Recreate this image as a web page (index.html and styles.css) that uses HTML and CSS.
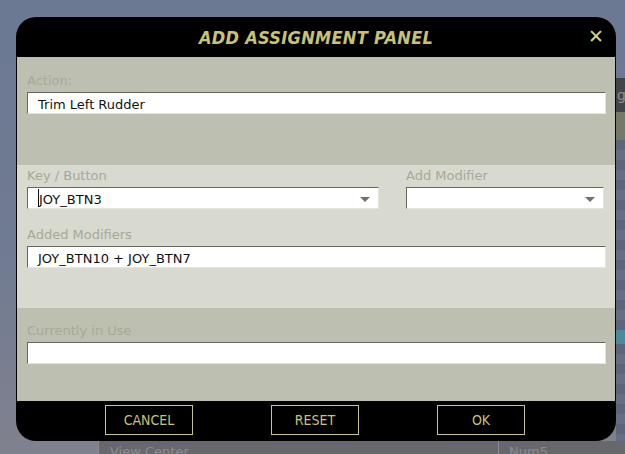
FILE: index.html
```html
<!DOCTYPE html>
<html lang="en">
<head>
  <meta charset="UTF-8" />
  <title>Add Assignment Panel</title>
  <link rel="stylesheet" href="styles.css">
</head>
<body>
  <div class="backdrop">
    <div class="side">
      <div class="side-gap"></div>
      <div class="side-head">g</div>
      <div class="side-bar"></div>
      <div class="side-rows">
        <div class="row"></div><div class="row alt"></div><div class="row"></div><div class="row alt"></div>
        <div class="row"></div><div class="row alt"></div><div class="row"></div><div class="row alt"></div>
        <div class="row"></div><div class="row alt"></div><div class="row"></div><div class="row alt"></div>
        <div class="row"></div><div class="row alt"></div><div class="row"></div><div class="row alt"></div>
        <div class="row"></div><div class="row alt"></div><div class="row"></div><div class="row sel"></div>
        <div class="row"></div><div class="row alt"></div><div class="row"></div><div class="row alt"></div>
        <div class="row"></div><div class="row alt"></div><div class="row"></div><div class="row alt"></div>
        <div class="row"></div><div class="row alt"></div>
      </div>
    </div>
    <div class="list">
      <div class="list-name">View Center</div>
      <div class="list-key">Num5</div>
    </div>
  </div>

  <div id="dialog">
    <div class="dlg-head">
      <h1>ADD ASSIGNMENT PANEL</h1>
      <span class="close">✕</span>
    </div>

    <div class="section dark s-action">
      <label>Action:</label>
      <div class="field">Trim Left Rudder</div>
    </div>

    <div class="section light s-keys">
      <div class="key-row">
        <div class="col key-col">
          <label>Key / Button</label>
          <div class="field select"><span class="caret-line"></span>JOY_BTN3<span class="arrow"></span></div>
        </div>
        <div class="col mod-col">
          <label>Add Modifier</label>
          <div class="field select"><span class="arrow"></span></div>
        </div>
      </div>
      <label>Added Modifiers</label>
      <div class="field">JOY_BTN10 + JOY_BTN7</div>
    </div>

    <div class="section dark s-use">
      <label>Currently in Use</label>
      <div class="field"></div>
    </div>

    <div class="dlg-foot">
      <button>CANCEL</button>
      <button>RESET</button>
      <button>OK</button>
    </div>
  </div>
</body>
</html>
```

FILE: styles.css
```css
html, body { margin: 0; height: 100%; }
body { font-family: "DejaVu Sans", sans-serif; font-size: 13px; background: linear-gradient(#6c7992 0%, #707b92 55%, #80818e 100%); overflow: hidden; position: relative; }

.backdrop { height: 454px; position: relative; }
.side { position: absolute; left: 616px; top: 0; width: 20px; height: 454px; display: flex; flex-direction: column; }
.side-gap { height: 78px; }
.side-head { height: 34px; background: #434446; color: #8e8e8e; font-size: 14px; line-height: 34px; padding-left: 1px; }
.side-bar { height: 28px; background: #76786c; }
.side-rows { display: flex; flex-direction: column; }
.row { height: 10px; background: #5f6579; }
.row.alt { background: #676d82; }
.row.sel { background: #4a8a9c; height: 14px; }
.list { position: absolute; left: 98px; top: 441px; width: 527px; height: 13px; background: #68686c; border-left: 1px solid #8a8a90; display: flex; color: #8b8b92; font-size: 13px; overflow: hidden; }
.list-name { width: 388px; padding: 3px 0 0 11px; line-height: 15px; }
.list-key { flex: 1; border-left: 1px solid #8a8a90; padding: 3px 0 0 10px; line-height: 15px; }

#dialog { position: absolute; left: 16px; top: 17px; width: 600px; height: 424px; background: #000; border-radius: 20px; overflow: hidden; display: flex; flex-direction: column; z-index: 1; }
.dlg-head { height: 40px; display: flex; align-items: center; justify-content: center; position: relative; }
.dlg-head h1 { margin: 0; font-family: "DejaVu Sans Condensed", "DejaVu Sans", sans-serif; font-style: italic; font-weight: bold; font-size: 18px; color: #c9c271; letter-spacing: 0.3px; }
.close { position: absolute; right: 12px; top: 8px; color: #d4d08a; font-size: 19px; line-height: 22px; }

.section { margin: 0 1px; padding: 0 9px 0 10px; display: flex; flex-direction: column; }
.section.dark { background: #bdc0b0; }
.section.light { background: #d8d9cf; }
.s-action { height: 108px; padding-top: 15px; box-sizing: border-box; }
.s-keys { height: 143px; padding-top: 2px; box-sizing: border-box; }
.s-use { height: 93px; padding-top: 14px; box-sizing: border-box; }

label { color: #a7a998; font-size: 13px; line-height: 17px; height: 17px; }
.field { height: 20px; background: #fff; border-top: 1px solid #66685e; border-left: 1px solid #66685e; border-bottom: 1px solid #e6e7dc; border-right: 1px solid #e6e7dc; margin-top: 3px; padding-left: 10px; line-height: 23px; color: #111; font-size: 13px; position: relative; overflow: hidden; }
.s-keys > label { margin-top: 17px; }

.key-row { display: flex; }
.col { display: flex; flex-direction: column; }
.key-col { width: 352px; }
.mod-col { width: 198px; margin-left: 27px; }
.select .arrow { position: absolute; right: 8px; top: 9px; width: 0; height: 0; border-left: 5px solid transparent; border-right: 5px solid transparent; border-top: 5px solid #707264; }
.caret-line { display: inline-block; width: 1px; height: 18px; background: #111; vertical-align: top; margin-top: 1px; margin-left: 0; margin-right: 0; }

.dlg-foot { flex: 1; display: flex; justify-content: flex-start; padding: 4px 0 0 89px; gap: 78px; }
.dlg-foot button { width: 88px; height: 30px; background: #000; border: 1px solid #c8c49a; color: #c8c274; font-family: "DejaVu Sans Condensed", "DejaVu Sans", sans-serif; font-size: 14px; padding: 0; }
```
